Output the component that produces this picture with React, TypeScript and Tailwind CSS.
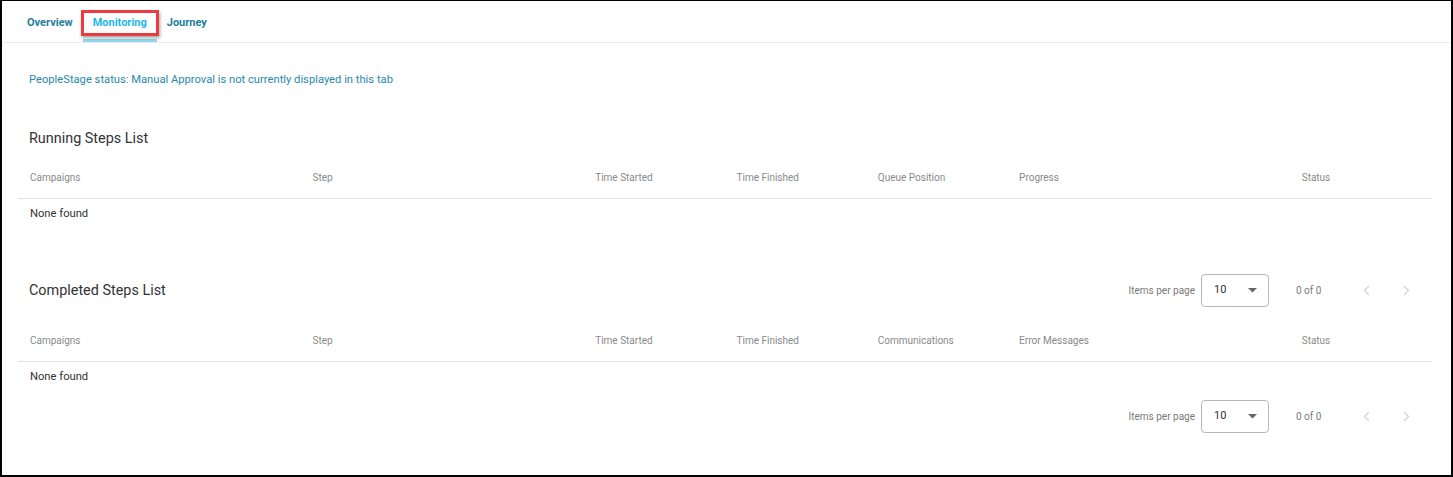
import React from 'react';

const columnsRunning = [
  { label: 'Campaigns', span: 'col-span-2' },
  { label: 'Step', span: 'col-span-2' },
  { label: 'Time Started', span: 'col-span-1' },
  { label: 'Time Finished', span: 'col-span-1' },
  { label: 'Queue Position', span: 'col-span-1' },
  { label: 'Progress', span: 'col-span-2' },
  { label: 'Status', span: 'col-span-1' },
];

const columnsCompleted = [
  { label: 'Campaigns', span: 'col-span-2' },
  { label: 'Step', span: 'col-span-2' },
  { label: 'Time Started', span: 'col-span-1' },
  { label: 'Time Finished', span: 'col-span-1' },
  { label: 'Communications', span: 'col-span-1' },
  { label: 'Error Messages', span: 'col-span-2' },
  { label: 'Status', span: 'col-span-1' },
];

function Paginator() {
  return (
    <div className="flex items-center text-[10px] text-[#7a7a7a]">
      <span className="mr-[6px]">Items per page</span>
      <div className="flex items-center justify-between w-[68px] h-[33px] border border-[#b8b8b8] rounded-[4px] pl-[12px] pr-[11px]">
        <span className="text-[11px] text-[#333]">10</span>
        <svg width="9" height="5" viewBox="0 0 9 5">
          <path d="M0 0 L9 0 L4.5 4.5 Z" fill="#666" />
        </svg>
      </div>
      <span className="ml-[27px] w-[50px]">0 of 0</span>
      <button className="w-10 h-10 flex items-center justify-center">
        <svg width="7" height="11" viewBox="0 0 7 11">
          <path d="M6 1 L1.5 5.5 L6 10" fill="none" stroke="#d2d2d2" strokeWidth="1.2" />
        </svg>
      </button>
      <button className="w-10 h-10 flex items-center justify-center">
        <svg width="7" height="11" viewBox="0 0 7 11">
          <path d="M1 1 L5.5 5.5 L1 10" fill="none" stroke="#d2d2d2" strokeWidth="1.2" />
        </svg>
      </button>
    </div>
  );
}

function StepsTable({ columns }: { columns: { label: string; span: string }[] }) {
  return (
    <div className="ml-[16px] mr-[20px]">
      <div className="grid grid-cols-10 h-[42px] items-center border-b border-[#e3e3e3] text-[10px] text-[#8a8a8a]">
        {columns.map((c) => (
          <div key={c.label} className={`${c.span} pl-[12px]`}>
            {c.label}
          </div>
        ))}
      </div>
      <div className="h-[30px] flex items-center pl-[12px] text-[11.2px] text-[#333]">None found</div>
    </div>
  );
}

export default function App() {
  const tabs = ['Overview', 'Monitoring', 'Journey'];

  return (
    <div
      className="w-[1453px] h-[477px] bg-white border-2 border-t border-black overflow-hidden"
      style={{ fontFamily: 'Roboto, "Noto Sans", sans-serif' }}
    >
      {/* Tab bar */}
      <div className="h-[42px] flex items-stretch border-b border-[#ececec] pl-[15px]">
        {tabs.map((t) => {
          const active = t === 'Monitoring';
          return (
            <div
              key={t}
              className={`relative flex items-center pt-[7px] px-[10px] text-[11px] font-bold ${
                active ? 'text-[#1db8ea] border-b-[3px] border-[#8fd9ef]' : 'text-[#1f7e9e] border-b-[3px] border-transparent'
              }`}
            >
              {t}
              {active && (
                <div className="absolute left-[-2px] right-[-2px] top-[9px] h-[26px] border-[3px] border-[#ec3b40] shadow-[1px_2px_3px_rgba(0,0,0,0.35)]" />
              )}
            </div>
          );
        })}
      </div>

      <div className="pt-[29px]">
        <p className="pl-[27px] text-[11.2px] leading-[16px] text-[#2a89ab]">
          PeopleStage status: Manual Approval is not currently displayed in this tab
        </p>

        {/* Running steps */}
        <h2 className="mt-[41px] pl-[27px] text-[14.4px] leading-[20px] text-[#333]">Running Steps List</h2>
        <div className="mt-[8px]">
          <StepsTable columns={columnsRunning} />
        </div>

        {/* Completed steps */}
        <div className="mt-[45px] flex items-center justify-between h-[33px] pl-[27px] pr-[25px]">
          <h2 className="text-[14.4px] leading-[20px] text-[#333]">Completed Steps List</h2>
          <Paginator />
        </div>
        <div className="mt-[13px]">
          <StepsTable columns={columnsCompleted} />
        </div>
        <div className="mt-[8px] flex justify-end h-[33px] items-center pr-[25px]">
          <Paginator />
        </div>
      </div>
    </div>
  );
}
